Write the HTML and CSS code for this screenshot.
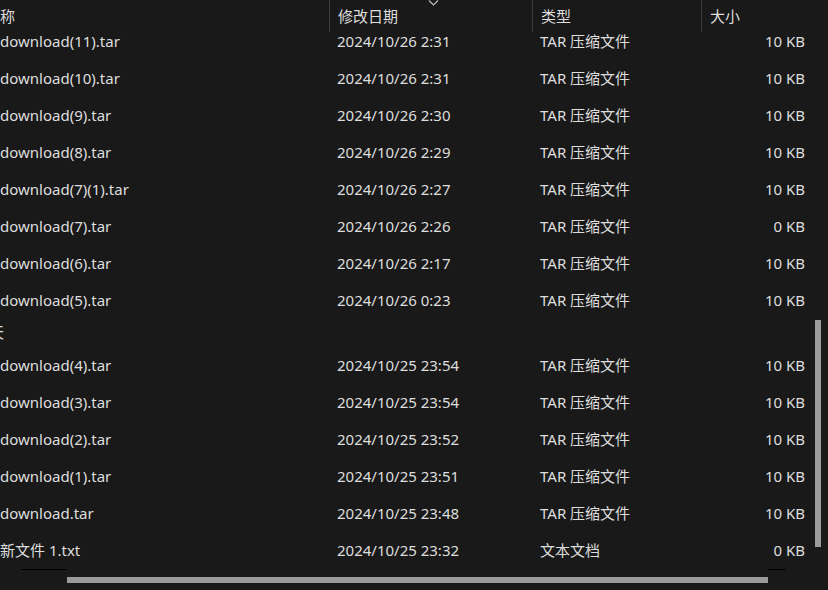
FILE: index.html
```html
<!DOCTYPE html>
<html lang="zh-CN">
<head>
<meta charset="utf-8">
<title>文件列表</title>
<link rel="stylesheet" href="styles.css">
</head>
<body>
<div class="view">
  <div class="header">
    <div class="hcell name">称</div>
    <div class="hcell date">修改日期
      <svg class="sort" width="11" height="6" viewBox="0 0 11 6"><path d="M1 0.5 L5.5 5 L10 0.5" fill="none" stroke="#bdbdbd" stroke-width="1.2"/></svg>
    </div>
    <div class="hcell type">类型</div>
    <div class="hcell size">大小</div>
  </div>
  <div class="list">
    <div class="row"><span class="c name">download(11).tar</span><span class="c date">2024/10/26 2:31</span><span class="c type">TAR 压缩文件</span><span class="c size">10 KB</span></div>
    <div class="row"><span class="c name">download(10).tar</span><span class="c date">2024/10/26 2:31</span><span class="c type">TAR 压缩文件</span><span class="c size">10 KB</span></div>
    <div class="row"><span class="c name">download(9).tar</span><span class="c date">2024/10/26 2:30</span><span class="c type">TAR 压缩文件</span><span class="c size">10 KB</span></div>
    <div class="row"><span class="c name">download(8).tar</span><span class="c date">2024/10/26 2:29</span><span class="c type">TAR 压缩文件</span><span class="c size">10 KB</span></div>
    <div class="row"><span class="c name">download(7)(1).tar</span><span class="c date">2024/10/26 2:27</span><span class="c type">TAR 压缩文件</span><span class="c size">10 KB</span></div>
    <div class="row"><span class="c name">download(7).tar</span><span class="c date">2024/10/26 2:26</span><span class="c type">TAR 压缩文件</span><span class="c size">0 KB</span></div>
    <div class="row"><span class="c name">download(6).tar</span><span class="c date">2024/10/26 2:17</span><span class="c type">TAR 压缩文件</span><span class="c size">10 KB</span></div>
    <div class="row"><span class="c name">download(5).tar</span><span class="c date">2024/10/26 0:23</span><span class="c type">TAR 压缩文件</span><span class="c size">10 KB</span></div>
    <div class="group">昨天</div>
    <div class="row"><span class="c name">download(4).tar</span><span class="c date">2024/10/25 23:54</span><span class="c type">TAR 压缩文件</span><span class="c size">10 KB</span></div>
    <div class="row"><span class="c name">download(3).tar</span><span class="c date">2024/10/25 23:54</span><span class="c type">TAR 压缩文件</span><span class="c size">10 KB</span></div>
    <div class="row"><span class="c name">download(2).tar</span><span class="c date">2024/10/25 23:52</span><span class="c type">TAR 压缩文件</span><span class="c size">10 KB</span></div>
    <div class="row"><span class="c name">download(1).tar</span><span class="c date">2024/10/25 23:51</span><span class="c type">TAR 压缩文件</span><span class="c size">10 KB</span></div>
    <div class="row"><span class="c name">download.tar</span><span class="c date">2024/10/25 23:48</span><span class="c type">TAR 压缩文件</span><span class="c size">10 KB</span></div>
    <div class="row"><span class="c name">新文件 1.txt</span><span class="c date">2024/10/25 23:32</span><span class="c type">文本文档</span><span class="c size">0 KB</span></div>
  </div>
  <div class="hbar-area">
    <div class="mark left"></div>
    <div class="hthumb"></div>
    <div class="mark right"></div>
  </div>
  <div class="vthumb"></div>
</div>
</body>
</html>
```
FILE: styles.css
```css
html, body {
  margin: 0;
  padding: 0;
  background: #191919;
  width: 828px;
  height: 590px;
  overflow: hidden;
}
.view {
  position: relative;
  width: 828px;
  height: 590px;
  color: #dedede;
  font-family: "Noto Sans", "Noto Sans CJK SC", sans-serif;
  font-size: 15px;
}
.header {
  display: grid;
  grid-template-columns: 329px 203px 169px 127px;
  height: 32px;
  margin-bottom: -10px;
  position: relative;
  z-index: 1;
}
.hcell {
  line-height: 32px;
  padding-left: 8px;
  border-left: 1px solid #3c3c3c;
  box-sizing: border-box;
  position: relative;
  white-space: nowrap;
}
.hcell.name {
  border-left: none;
  padding-left: 0;
}
.sort {
  position: absolute;
  left: 98px;
  top: 0;
}
.list {
  display: flex;
  flex-direction: column;
}
.row {
  display: grid;
  grid-template-columns: 329px 203px 169px 104px;
  height: 37px;
  line-height: 20px;
  align-items: center;
  white-space: nowrap;
}
.c.date, .c.type {
  padding-left: 8px;
}
.c.size {
  text-align: right;
}
.group {
  height: 28px;
  line-height: 28px;
  margin-left: -26px;
}
.hbar-area {
  position: absolute;
  left: 0;
  top: 568px;
  width: 828px;
  height: 16px;
}
.mark {
  position: absolute;
  top: 1px;
  height: 1px;
  background: #000;
}
.mark.left { left: 21px; width: 46px; }
.mark.right { left: 768px; width: 18px; }
.hthumb {
  position: absolute;
  left: 67px;
  top: 9px;
  width: 701px;
  height: 6px;
  background: #9b9b9b;
}
.vthumb {
  position: absolute;
  left: 815px;
  top: 320px;
  width: 6px;
  height: 227px;
  background: #9b9b9b;
}
```
